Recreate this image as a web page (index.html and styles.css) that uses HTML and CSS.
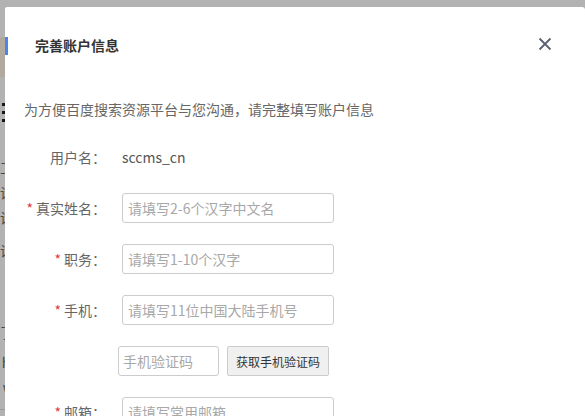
FILE: index.html
```html
<!DOCTYPE html>
<html lang="zh-CN">
<head>
<meta charset="utf-8">
<title>完善账户信息</title>
<link rel="stylesheet" href="styles.css">
</head>
<body>
  <div class="page">
    <aside class="side-nav">
      <div class="side-brand"></div>
      <div class="side-icon"><span></span><span></span><span></span></div>
      <ul class="side-list">
        <li class="l1">工</li>
        <li class="l2">设</li>
        <li class="l3">设</li>
        <li class="l4">设</li>
        <li class="l5">了</li>
        <li class="l6">hi</li>
        <li class="l7">w</li>
      </ul>
    </aside>
  </div>
  <div class="mask"></div>

  <div class="dialog">
    <div class="dialog-head">
      <h3 class="dialog-title">完善账户信息</h3>
      <button class="dialog-close" type="button" aria-label="关闭">
        <svg width="14" height="14" viewBox="0 0 14 14"><path d="M1.5 1.5 L12.5 12.5 M12.5 1.5 L1.5 12.5" stroke="#5a6170" stroke-width="1.8" fill="none"/></svg>
      </button>
    </div>
    <div class="dialog-body">
      <p class="intro">为方便百度搜索资源平台与您沟通，请完整填写账户信息</p>
      <form class="form">
        <div class="row">
          <label class="lbl">用户名：</label>
          <span class="val">sccms_cn</span>
        </div>
        <div class="row">
          <label class="lbl"><i class="req">*</i>真实姓名：</label>
          <input class="ipt" type="text" placeholder="请填写2-6个汉字中文名">
        </div>
        <div class="row">
          <label class="lbl"><i class="req">*</i>职务：</label>
          <input class="ipt" type="text" placeholder="请填写1-10个汉字">
        </div>
        <div class="row">
          <label class="lbl"><i class="req">*</i>手机：</label>
          <input class="ipt" type="text" placeholder="请填写11位中国大陆手机号">
        </div>
        <div class="row">
          <label class="lbl"></label>
          <div class="code-group">
            <input class="ipt ipt-code" type="text" placeholder="手机验证码">
            <button class="btn-code" type="button">获取手机验证码</button>
          </div>
        </div>
        <div class="row">
          <label class="lbl"><i class="req">*</i>邮箱：</label>
          <input class="ipt" type="text" placeholder="请填写常用邮箱">
        </div>
      </form>
    </div>
  </div>
  <div class="side-tab"></div>
</body>
</html>
```

FILE: styles.css
```css
* { box-sizing: border-box; }

html, body {
  margin: 0;
  height: 100%;
  overflow: hidden;
}

body {
  font-family: "Noto Sans CJK SC", "Noto Sans", sans-serif;
  font-size: 14px;
  color: #333;
  background: #fff;
  position: relative;
}

/* page underneath the dialog */
.page {
  height: 100%;
}

.side-nav {
  width: 200px;
  margin-left: -195px;
  padding-top: 37px;
  color: #6a6a6a;
  font-size: 14px;
  line-height: 16px;
  text-align: right;
  height: 410px;
  border-bottom: 1px solid #ddd;
}

.side-brand {
  height: 40px;
  background: #fff2e2;
}

.side-icon {
  margin-top: 26px;
  height: 26px;
  display: flex;
  flex-direction: column;
  align-items: flex-end;
  gap: 5px;
}
.side-icon span {
  display: block;
  width: 3px;
  height: 3px;
  background: #222;
}

.side-list {
  list-style: none;
  margin: 0;
  padding: 0;
}

.side-list li {
  margin-right: -9px;
  height: 25px;
}
.side-list .l1 { margin-top: 30px; }
.side-list .l4 { margin-top: 8px; }
.side-list .l5 { margin-top: 57px; }
.side-list .l6 { margin-top: 5px; }

.mask {
  position: absolute;
  inset: 0;
  background: rgba(0, 0, 0, 0.3);
}

.side-tab {
  position: absolute;
  left: 5px;
  top: 37px;
  width: 3px;
  height: 18px;
  background: #4a86e8;
}

/* dialog */
.dialog {
  position: absolute;
  left: 5px;
  top: 7px;
  right: 0;
  bottom: -60px;
  background: #fff;
  border-radius: 2px 3px 0 0;
}

.dialog-head {
  display: flex;
  align-items: center;
  justify-content: space-between;
  padding: 30px 33px 0 30px;
}

.dialog-title {
  margin: 0;
  font-size: 14px;
  font-weight: bold;
  line-height: 16px;
  color: #333;
}

.dialog-close {
  border: 0;
  padding: 0;
  background: none;
  width: 14px;
  height: 14px;
  display: block;
  margin-top: -2px;
}
.dialog-close svg { display: block; }

.dialog-body {
  padding: 0 19px;
}

.intro {
  margin: 46px 0 0;
  font-size: 14px;
  line-height: 20px;
  color: #666;
}

.form {
  margin-top: 23px;
}

.row {
  display: flex;
  align-items: center;
  gap: 16px;
  height: 30px;
  margin-bottom: 21px;
}

.lbl {
  width: 82px;
  flex: none;
  text-align: right;
  color: #666;
  font-size: 14px;
  line-height: 20px;
  white-space: nowrap;
}

.req {
  font-style: normal;
  color: #e4393c;
  margin-right: 3px;
}

.val {
  color: #555;
  font-size: 14px;
  line-height: 20px;
}

.ipt {
  width: 212px;
  height: 30px;
  border: 1px solid #ccc;
  border-radius: 3px;
  padding: 0 5px;
  font-family: inherit;
  font-size: 14px;
  color: #333;
  outline: none;
}
.ipt::placeholder { color: #a8a8a8; }

.code-group {
  display: flex;
  gap: 8px;
  margin-left: -4px;
}

.ipt-code {
  width: 101px;
  padding: 0 4px;
}

.btn-code {
  width: 102px;
  height: 30px;
  border: 1px solid #ccc;
  border-radius: 2px;
  background: #f0f0f0;
  font-family: inherit;
  font-size: 12px;
  color: #333;
  padding: 0;
}
```
